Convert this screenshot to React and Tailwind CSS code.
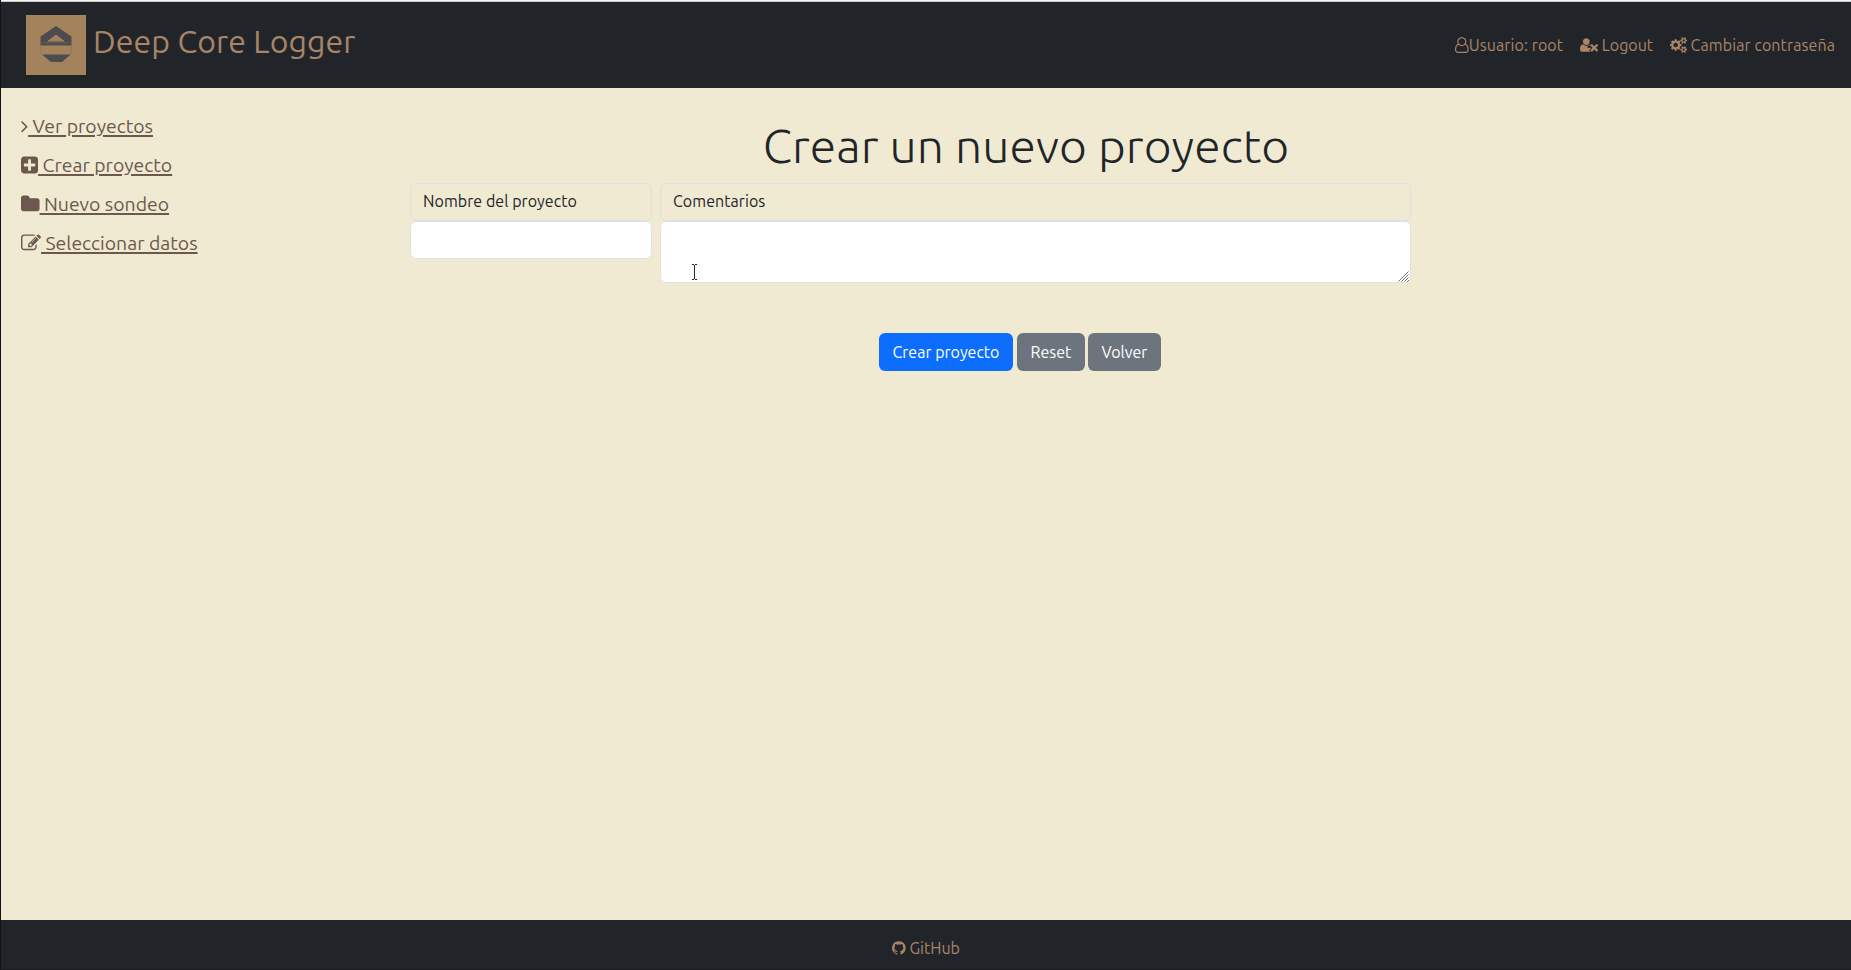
import React from 'react';

const ICONS = {
  userO: ['0 0 1536 1792', 'M1201 784q47 14 89.5 38t89 73 79.5 115.5 55 172 22 236.5q0 154-100 263.5t-241 109.5h-854q-141 0-241-109.5t-100-263.5q0-131 22-236.5t55-172 79.5-115.5 89-73 89.5-38q-79-125-79-272 0-104 40.5-198.5t109.5-163.5 163.5-109.5 198.5-40.5 198.5 40.5 163.5 109.5 109.5 163.5 40.5 198.5q0 147-79 272zm-433-656q-159 0-271.5 112.5t-112.5 271.5 112.5 271.5 271.5 112.5 271.5-112.5 112.5-271.5-112.5-271.5-271.5-112.5zm427 1536q88 0 150.5-71.5t62.5-173.5q0-239-78.5-377t-225.5-145q-145 127-336 127t-336-127q-147 7-225.5 145t-78.5 377q0 102 62.5 173.5t150.5 71.5h854z'],
  userTimes: ['0 0 2048 1792', 'M704 896q-159 0-271.5-112.5t-112.5-271.5 112.5-271.5 271.5-112.5 271.5 112.5 112.5 271.5-112.5 271.5-271.5 112.5zm1077 320l249 249q9 9 9 23 0 13-9 22l-136 136q-9 9-22 9-14 0-23-9l-249-249-249 249q-9 9-23 9-13 0-22-9l-136-136q-9-9-9-22 0-14 9-23l249-249-249-249q-9-9-9-23 0-13 9-22l136-136q9-9 22-9 14 0 23 9l249 249 249-249q9-9 23-9 13 0 22 9l136 136q9 9 9 22 0 14-9 23zm-498 0l-181 181q-37 37-37 91 0 53 37 90l83 83q-21 3-44 3h-874q-121 0-194-69t-73-190q0-53 3.5-103.5t14-109 26.5-108.5 43-97.5 62-81 85.5-53.5 111.5-20q19 0 39 17 79 61 154.5 91.5t164.5 30.5 164.5-30.5 154.5-91.5q20-17 39-17 132 0 217 96h-223q-53 0-90 37l-83 83q-37 37-37 90 0 54 37 91z'],
  cogs: ['-64 0 1920 1792', 'M832 896q0-106-75-181t-181-75-181 75-75 181 75 181 181 75 181-75 75-181zm768 512q0-52-38-90t-90-38-90 38-38 90q0 53 37.5 90.5t90.5 37.5 90.5-37.5 37.5-90.5zm0-1024q0-52-38-90t-90-38-90 38-38 90q0 53 37.5 90.5t90.5 37.5 90.5-37.5 37.5-90.5zm-384 421v185q0 10-7 19.5t-16 10.5l-155 24q-11 35-32 76 34 48 90 115 7 11 7 20 0 12-7 19-23 30-82.5 89.5t-78.5 59.5q-11 0-21-7l-115-90q-37 19-77 31-11 108-23 155-7 24-30 24h-186q-11 0-20-7.5t-10-17.5l-23-153q-34-10-75-31l-118 89q-7 7-20 7-11 0-21-8-144-133-144-160 0-9 7-19 10-14 41-53t47-61q-23-44-35-82l-152-24q-10-1-17-9.5t-7-19.5v-185q0-10 7-19.5t16-10.5l155-24q11-35 32-76-34-48-90-115-7-11-7-20 0-12 7-20 22-30 82-89t79-59q11 0 21 7l115 90q34-18 77-32 11-108 23-154 7-24 30-24h186q11 0 20 7.5t10 17.5l23 153q34 10 75 31l118-89q8-7 20-7 11 0 21 8 144 133 144 160 0 8-7 19-12 16-42 54t-45 60q23 48 34 82l152 23q10 2 17 10.5t7 19.5zm640 533v140q0 16-149 31-12 27-30 52 51 113 51 138 0 4-4 7-122 71-124 71-8 0-46-47t-52-68q-20 2-30 2t-30-2q-14 21-52 68t-46 47q-2 0-124-71-4-3-4-7 0-25 51-138-18-25-30-52-149-15-149-31v-140q0-16 149-31 13-29 30-52-51-113-51-138 0-4 4-7 4-2 35-20t59-34 30-16q8 0 46 46.5t52 67.5q20-2 30-2t30 2q51-71 92-112l6-2q4 0 124 70 4 3 4 7 0 25-51 138 17 23 30 52 149 15 149 31zm0-1024v140q0 16-149 31-12 27-30 52 51 113 51 138 0 4-4 7-122 71-124 71-8 0-46-47t-52-68q-20 2-30 2t-30-2q-14 21-52 68t-46 47q-2 0-124-71-4-3-4-7 0-25 51-138-18-25-30-52-149-15-149-31v-140q0-16 149-31 13-29 30-52-51-113-51-138 0-4 4-7 4-2 35-20t59-34 30-16q8 0 46 46.5t52 67.5q20-2 30-2t30 2q51-71 92-112l6-2q4 0 124 70 4 3 4 7 0 25-51 138 17 23 30 52 149 15 149 31z'],
  angle: ['576 0 640 1792', 'M1171 960q0 13-10 23l-466 466q-10 10-23 10t-23-10l-50-50q-10-10-10-23t10-23l393-393-393-393q-10-10-10-23t10-23l50-50q10-10 23-10t23 10l466 466q10 10 10 23z'],
  plus: ['128 0 1536 1792', 'M1408 960v-128q0-26-19-45t-45-19h-320v-320q0-26-19-45t-45-19h-128q-26 0-45 19t-19 45v320h-320q-26 0-45 19t-19 45v128q0 26 19 45t45 19h320v320q0 26 19 45t45 19h128q26 0 45-19t19-45v-320h320q26 0 45-19t19-45zm256-544v960q0 119-84.5 203.5t-203.5 84.5h-960q-119 0-203.5-84.5t-84.5-203.5v-960q0-119 84.5-203.5t203.5-84.5h960q119 0 203.5 84.5t84.5 203.5z'],
  folder: ['64 0 1664 1792', 'M1728 608v704q0 92-66 158t-158 66h-1216q-92 0-158-66t-66-158v-960q0-92 66-158t158-66h320q92 0 158 66t66 158v32h672q92 0 158 66t66 158z'],
  edit: ['0 0 1792 1792', 'M888 1184l116-116-152-152-116 116v56h96v96h56zm440-720q-16-16-33 1l-350 350q-17 17-1 33t33-1l350-350q17-17 1-33zm80 594v190q0 119-84.5 203.5t-203.5 84.5h-832q-119 0-203.5-84.5t-84.5-203.5v-832q0-119 84.5-203.5t203.5-84.5h832q63 0 117 25 15 7 18 23 3 17-9 29l-49 49q-14 14-32 8-23-6-45-6h-832q-66 0-113 47t-47 113v832q0 66 47 113t113 47h832q66 0 113-47t47-113v-126q0-13 9-22l64-64q15-15 35-7t20 29zm-96-738l288 288-672 672h-288v-288zm444 132l-92 92-288-288 92-92q28-28 68-28t68 28l152 152q28 28 28 68t-28 68z'],
  github: ['128 0 1536 1792', 'M896 128q209 0 385.5 103t279.5 279.5 103 385.5q0 251-146.5 451.5t-378.5 277.5q-27 5-40-7t-13-30q0-3 .5-76.5t.5-134.5q0-97-52-142 57-6 102.5-18t94-39 81-66.5 53-105 20.5-150.5q0-119-79-206 37-91-8-204-28-9-81 11t-92 44l-38 24q-93-26-192-26t-192 26q-16-11-42.5-27t-83.5-38.5-85-13.5q-45 113-8 204-79 87-79 206 0 85 20.5 150t52.5 105 80.5 67 94 39 102.5 18q-39 36-49 103-21 10-45 15t-57 5-65.5-21.5-55.5-62.5q-19-32-48.5-52t-49.5-24l-20-3q-21 0-29 4.5t-5 11.5 9 14 13 12l7 5q22 10 43.5 38t31.5 51l10 23q13 38 44 61.5t67 30 69.5 7 55.5-3.5l23-4q0 38 .5 88.5t.5 54.5q0 18-13 30t-40 7q-232-77-378.5-277.5t-146.5-451.5q0-209 103-385.5t279.5-279.5 385.5-103z'],
};

function Icon({ name, className }) {
  const [viewBox, d] = ICONS[name];
  return (
    <svg viewBox={viewBox} className={`shrink-0 fill-current ${className}`} aria-hidden="true">
      <path d={d} />
    </svg>
  );
}

function Logo() {
  return (
    <svg viewBox="0 0 60 60" className="size-[60px] shrink-0" aria-hidden="true">
      <rect width="60" height="60" fill="#a3835c" />
      <path fill="#4e4b50" fillRule="evenodd" d="M30 11 45.500 21.500V30.500H14.500V21.500ZM30 19.500 21 26.500H39Z" />
      <path d="M15 27.800H45" stroke="#6a5c55" strokeWidth="1" />
      <path d="M15 30V39M45 30V39" stroke="#8c745a" strokeWidth="1" />
      <path fill="#4e4b50" d="M16 39.500H44.500L36 47H25Z" />
    </svg>
  );
}

const sideLinks = [
  { icon: 'angle', size: 'h-5 w-[7.140px]', label: 'Ver proyectos' },
  { icon: 'plus', size: 'h-5 w-[17.140px]', label: 'Crear proyecto' },
  { icon: 'folder', size: 'h-5 w-[18.570px]', label: 'Nuevo sondeo' },
  { icon: 'edit', size: 'h-5 w-5', label: 'Seleccionar datos' },
];

export default function App() {
  return (
    <div className="flex h-[970px] w-full flex-col overflow-hidden border-l border-[#111315] bg-[#f0ead2] font-['Ubuntu','Noto_Sans',sans-serif] text-base text-[#212529]">
      <div className="h-0.5 shrink-0 border-b border-[#c9cccd] bg-[#f4f5f5]" />
      <header className="flex h-[86px] shrink-0 items-center justify-between bg-[#212529] pl-[25px] pr-4 text-[#a98467]">
        <a href="#" className="flex items-center">
          <Logo />
          <span className="pb-2 pl-[7px] text-[32px] leading-10 tracking-[0.1px]">Deep Core Logger</span>
        </a>
        <nav className="flex items-center gap-[16.500px] leading-6 tracking-[0.1px]">
          <a href="#" className="flex items-center">
            <Icon name="userO" className="h-4 w-[13.700px]" />
            <span>Usuario: root</span>
          </a>
          <a href="#" className="flex items-center">
            <Icon name="userTimes" className="h-4 w-[18.290px]" />
            <span className="whitespace-pre tracking-normal">{' Logout'}</span>
          </a>
          <a href="#" className="flex items-center">
            <Icon name="cogs" className="h-4 w-[17.140px]" />
            <span className="whitespace-pre">{' Cambiar contraseña'}</span>
          </a>
        </nav>
      </header>

      <div className="flex min-h-0 flex-1">
        <aside className="flex w-[409px] shrink-0 flex-col pl-5 pt-[18px] text-[19.400px] text-[#6c584c]">
          {sideLinks.map((l) => (
            <a key={l.label} href="#" className="flex h-[39px] items-center">
              <Icon name={l.icon} className={l.size} />
              <span className="whitespace-pre pt-px leading-7 underline decoration-2 underline-offset-2">{' ' + l.label}</span>
            </a>
          ))}
        </aside>

        <main className="flex-1 pt-7">
          <h1 className="w-[1232px] text-center text-5xl font-light leading-[58px] tracking-[0.1px]">Crear un nuevo proyecto</h1>
          <form className="pt-[9px]">
            <div className="flex items-start gap-2">
              <div className="flex w-[242px] flex-col">
                <label htmlFor="nombre" className="h-[38px] rounded-md border border-[#dee2e6] px-3 pt-[5px] leading-6 tracking-[0.06px]">Nombre del proyecto</label>
                <input id="nombre" className="h-[38px] rounded-md border border-[#dee2e6] bg-white px-3" />
              </div>
              <div className="relative flex w-[751px] flex-col">
                <label htmlFor="comentarios" className="h-[38px] rounded-md border border-[#dee2e6] px-3 pt-[5px] leading-6 tracking-[0.06px]">Comentarios</label>
                <textarea id="comentarios" className="h-[62px] resize-none rounded-md border border-[#dee2e6] bg-white px-3 py-1.5" />
                <svg viewBox="0 0 11 11" className="absolute bottom-px right-0.5 size-[11px]" fill="none" stroke="#777" strokeWidth="1" aria-hidden="true">
                  <path d="M.5 10.500 10.500.5M3.500 10.500 10.500 3.500M6.500 10.500 10.500 6.500M9 11 11 9" />
                </svg>
                <svg viewBox="0 0 9 19" className="absolute left-[30px] top-[80px] h-[19px] w-[9px]" fill="none" aria-hidden="true">
                  <path d="M2 1.500H4M5 1.500H7M4.500 2V16M2 16.500H4M5 16.500H7" stroke="#fff" strokeWidth="3" />
                  <path d="M2 1.500H4M5 1.500H7M4.500 2V16M2 16.500H4M5 16.500H7" stroke="#222" />
                </svg>
              </div>
            </div>
            <div className="flex gap-1 pl-[469px] pt-[50px] text-white">
              <button type="submit" className="h-[38px] w-[134px] rounded-md bg-[#0d6efd]">Crear proyecto</button>
              <button type="reset" className="h-[38px] w-[68px] rounded-md bg-[#6c757d]">Reset</button>
              <button type="button" className="-ml-px h-[38px] w-[73px] rounded-md bg-[#6c757d]">Volver</button>
            </div>
          </form>
        </main>
      </div>

      <footer className="flex h-[50px] shrink-0 items-center justify-center border-b border-[#1c1a1e] bg-[#212529] pt-[7px] text-[#a98467]">
        <a href="#" className="flex items-center">
          <Icon name="github" className="h-4 w-[13.700px]" />
          <span className="whitespace-pre">{' GitHub'}</span>
        </a>
      </footer>
    </div>
  );
}
